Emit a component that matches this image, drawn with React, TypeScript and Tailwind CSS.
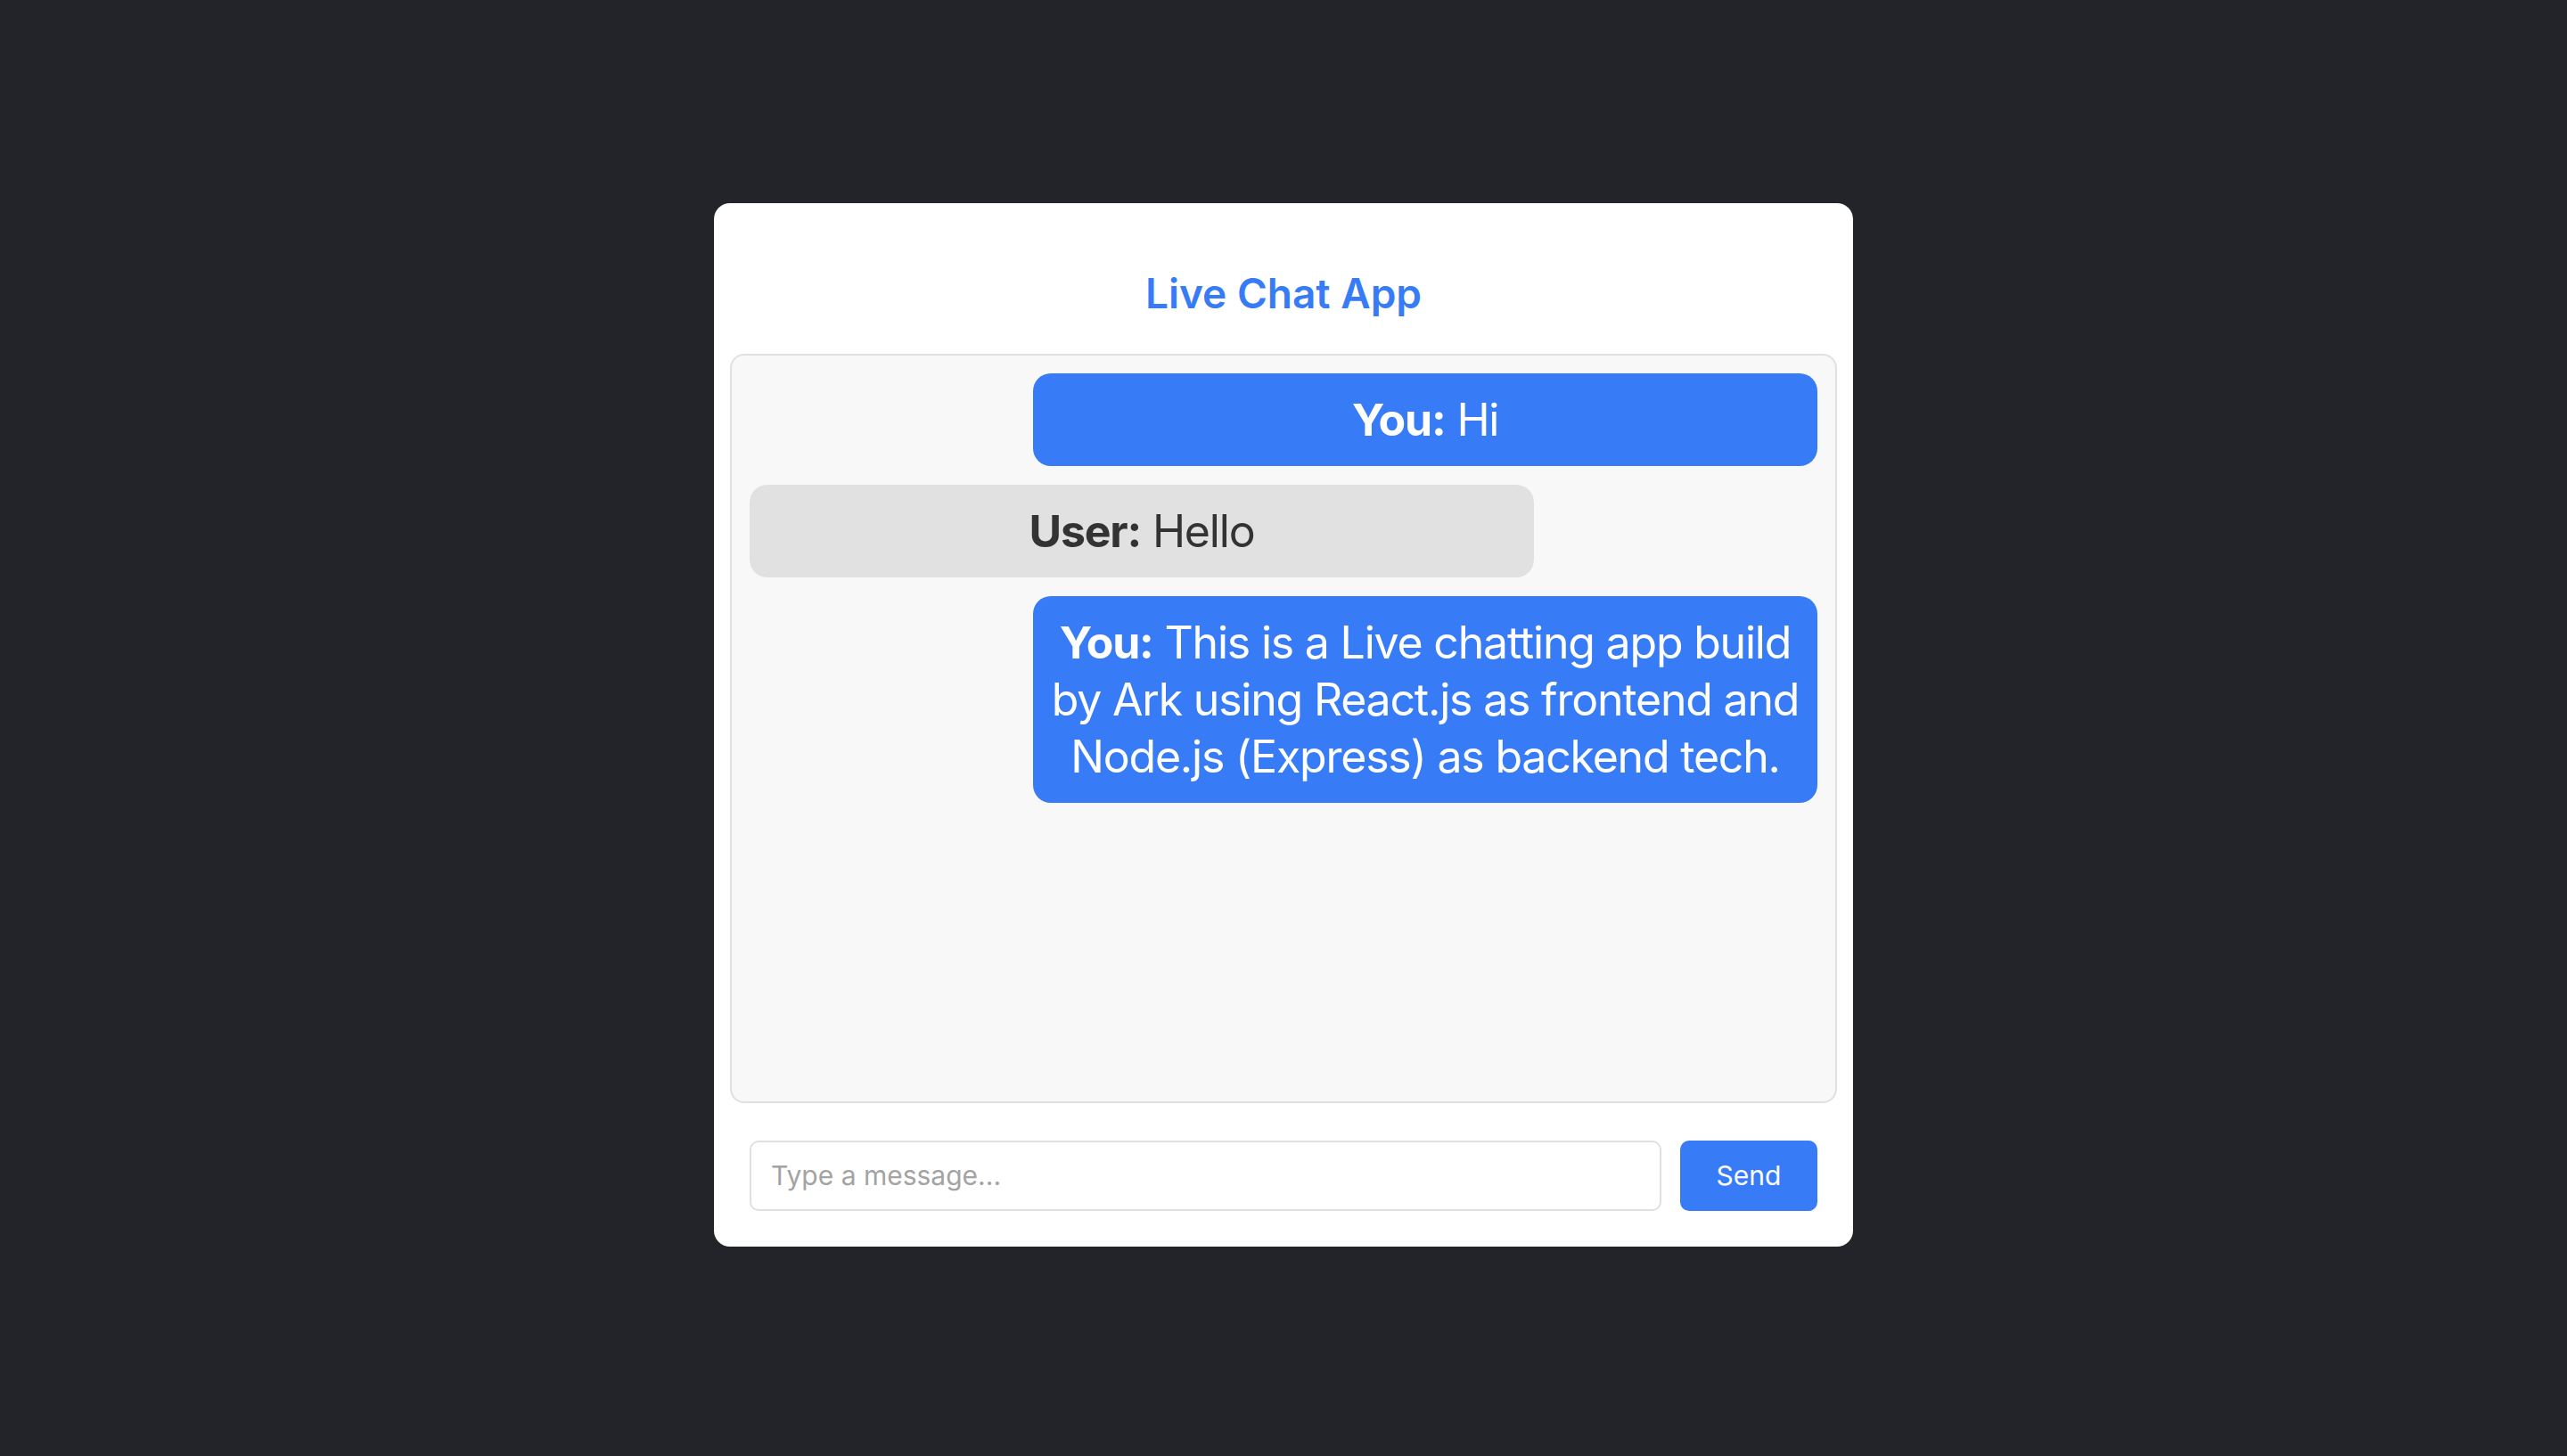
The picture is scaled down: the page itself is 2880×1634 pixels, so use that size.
import {useState} from 'react'

type Message = {
  from: 'me' | 'other'
  text: string
}

const messages: Message[] = [
  {from: 'me', text: 'Hi'},
  {from: 'other', text: 'Hello'},
  {
    from: 'me',
    text: 'This is a Live chatting app build by Ark using React.js as frontend and Node.js (Express) as backend tech.',
  },
]

export default function App() {
  const [draft, setDraft] = useState('')

  return (
    <div
      className="flex min-h-[1634px] w-full items-center justify-center bg-[#232429] pb-[8px]"
      style={{fontFamily: 'Inter, "Noto Sans", sans-serif'}}
    >
      <div className="flex w-[1278px] flex-col rounded-[18px] bg-white p-[18px]">
        <div className="flex h-[151px] items-center justify-center pt-[16px]">
          <h1 className="text-[46px] leading-none font-semibold text-[#377cf6]">
            Live Chat App
          </h1>
        </div>

        <div className="flex h-[841px] flex-col gap-[21px] rounded-[16px] border-2 border-[#e0e0e0] bg-[#f8f8f8] p-[20px]">
          {messages.map((m, i) => (
            <MessageBubble key={i} message={m} />
          ))}
        </div>

        <form
          className="mt-[42px] flex gap-[21px] px-[22px] pb-[22px]"
          onSubmit={(e) => {
            e.preventDefault()
            setDraft('')
          }}
        >
          <input
            value={draft}
            onChange={(e) => setDraft(e.target.value)}
            placeholder="Type a message..."
            className="h-[79px] flex-1 rounded-[10px] border-2 border-[#e0e0e0] bg-white px-[22px] text-[30px] text-[#333] outline-none placeholder:text-[#a3a3a3]"
          />
          <button
            type="submit"
            className="h-[79px] w-[154px] rounded-[10px] bg-[#377cf6] text-[30px] text-white"
          >
            Send
          </button>
        </form>
      </div>
    </div>
  )
}

function MessageBubble(props: {message: Message}) {
  const {message} = props
  const mine = message.from === 'me'

  return (
    <div
      className={
        mine
          ? 'w-[880px] self-end rounded-[20px] bg-[#377cf6] px-[14px] py-[20px] text-center text-[50px] leading-[64px] tracking-[-1.2px] text-white'
          : 'w-[880px] self-start rounded-[20px] bg-[#e1e1e1] px-[14px] py-[20px] text-center text-[50px] leading-[64px] tracking-[-1.2px] text-[#333]'
      }
    >
      <strong className="font-bold">{mine ? 'You:' : 'User:'}</strong>{' '}
      {message.text}
    </div>
  )
}
